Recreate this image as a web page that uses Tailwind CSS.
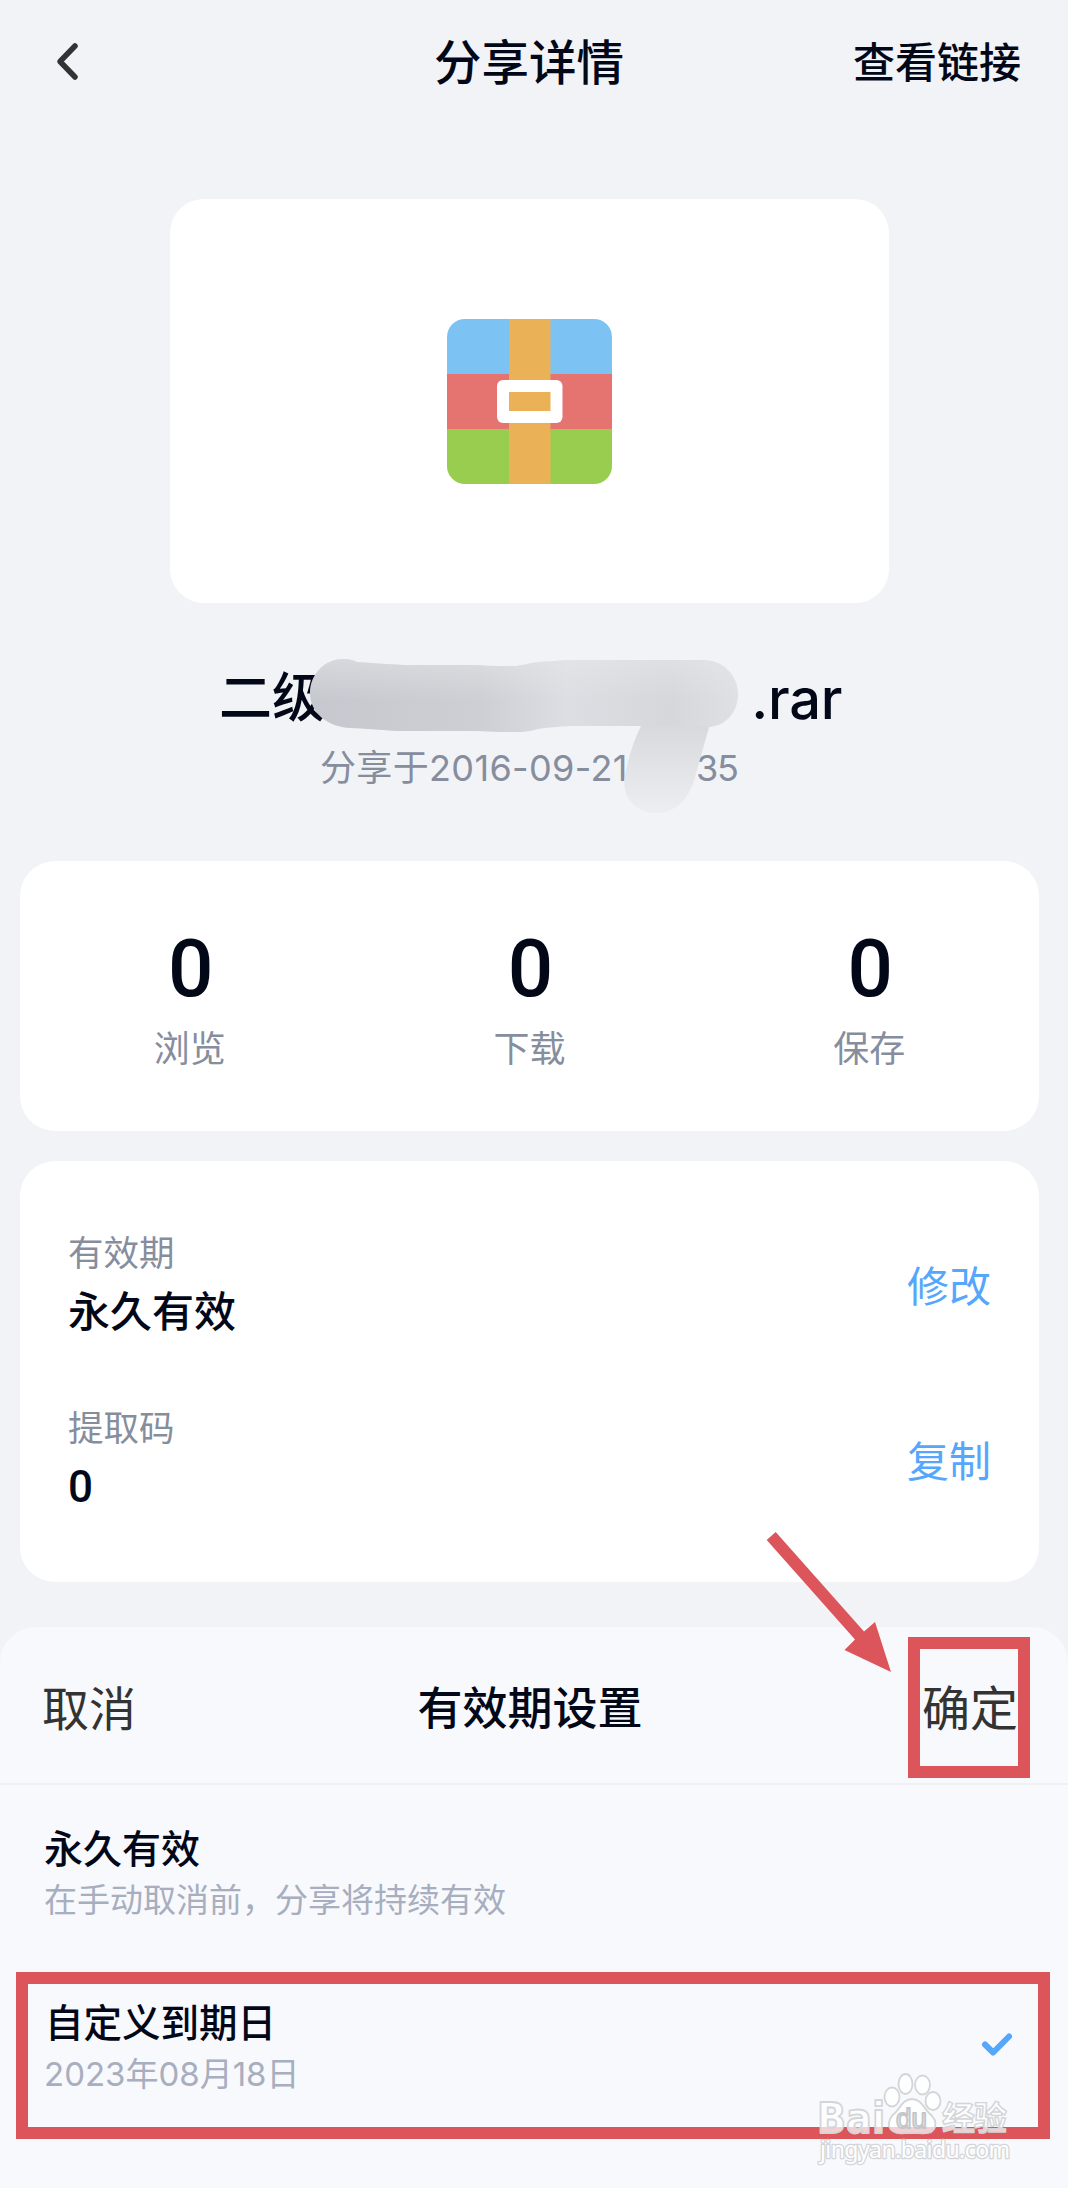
<!DOCTYPE html>
<html lang="zh-CN">
<head>
<meta charset="utf-8">
<title>分享详情</title>
<script src="https://cdn.jsdelivr.net/npm/@tailwindcss/browser@4"></script>
</head>
<body class="bg-[#f1f3f7] font-['Inter','Noto_Sans_CJK_SC',sans-serif] text-[#030818]">
<div class="relative flex h-[2188px] w-[1068px] flex-col overflow-hidden">

  <header class="grid h-[126px] grid-cols-3 items-center pl-[52px] pr-[47px]">
    <svg class="-mt-[2px] h-[40px] w-[30px]" viewBox="0 0 30 40" fill="none" stroke="#333" stroke-width="5.500" stroke-linecap="round" stroke-linejoin="round"><path d="M23 4 8 19.500 23 35"/></svg>
    <h1 class="-ml-[15px] text-center text-[47.5px] leading-[60px] font-medium">分享详情</h1>
    <span class="text-right text-[42px] leading-[60px] font-medium">查看链接</span>
  </header>

  <main class="flex flex-col pl-5 pr-[29px]">
    <div class="mx-auto mt-[73px] flex h-[404px] w-[719px] items-center justify-center rounded-[34px] bg-white">
      <svg class="h-[165px] w-[165px]" viewBox="0 0 165 165">
        <defs><clipPath id="tile"><rect width="165" height="165" rx="18"/></clipPath></defs>
        <g clip-path="url(#tile)">
          <rect width="165" height="55" fill="#7cc3f3"/>
          <rect y="55" width="165" height="55" fill="#e5736f"/>
          <rect y="110" width="165" height="55" fill="#98cd50"/>
          <rect x="62" width="41.500" height="165" fill="#ebb156"/>
        </g>
        <rect x="50" y="61" width="65.500" height="43" rx="6" fill="#fff"/>
        <rect x="62" y="73" width="41.500" height="19" fill="#ebb156"/>
      </svg>
    </div>

    <div class="mt-[63px] flex h-[64px] items-center justify-between pl-[199px] pr-[197px] text-[53px] leading-[64px] font-medium">
      <span>二级</span><span class="pt-px text-[56px] tracking-[-0.3px]">.rar</span>
    </div>
    <div class="mt-[15px] flex h-[46px] items-center justify-between pl-[300px] pr-[301px] text-[36px] leading-[46px] text-[#868d9d]">
      <span class="tracking-[0.35px]">分享于2016-09-21</span><span class="tracking-[-1px]">35</span>
    </div>

    <section class="mt-[70px] grid h-[270px] grid-cols-3 rounded-[35px] bg-white pt-[68px] text-center">
      <div><p class="pl-[2px] font-['Roboto'] text-[80px] leading-[80px] font-medium">0</p><p class="mt-[17px] text-[36px] leading-[46px] text-[#868d9d]">浏览</p></div>
      <div><p class="pl-[2px] font-['Roboto'] text-[80px] leading-[80px] font-medium">0</p><p class="mt-[17px] text-[36px] leading-[46px] text-[#868d9d]">下载</p></div>
      <div><p class="pl-[2px] font-['Roboto'] text-[80px] leading-[80px] font-medium">0</p><p class="mt-[17px] text-[36px] leading-[46px] text-[#868d9d]">保存</p></div>
    </section>

    <section class="mt-[30px] flex h-[421px] flex-col gap-[59px] rounded-[35px] bg-white px-12 pt-[68px]">
      <div class="flex h-[116px] items-center justify-between">
        <div>
          <p class="text-[35.500px] leading-[50px] text-[#868d9d]">有效期</p>
          <p class="mt-[3px] mb-[3px] text-[42px] leading-[60px] font-medium">永久有效</p>
        </div>
        <span class="text-[42px] leading-[60px] text-[#56a6fb]">修改</span>
      </div>
      <div class="flex h-[116px] items-center justify-between">
        <div>
          <p class="text-[35.500px] leading-[50px] text-[#868d9d]">提取码</p>
          <p class="mt-[3px] mb-[3px] font-['Roboto'] text-[44px] leading-[60px] font-medium">0</p>
        </div>
        <span class="text-[42px] leading-[60px] text-[#56a6fb]">复制</span>
      </div>
    </section>
  </main>

  <section class="mt-[45px] flex flex-1 flex-col rounded-t-[36px] bg-[#f8f9fc]">
    <div class="flex h-[158px] items-center justify-between border-b-2 border-[#eef0f3] pt-[7px] pl-[42px] pr-[50px] text-[47px] leading-[60px] text-[#333]">
      <span>取消</span>
      <h2 class="ml-[2px] text-[45px] font-medium text-[#030818]">有效期设置</h2>
      <span class="text-[48px]">确定</span>
    </div>
    <div class="px-11 pt-[38px]">
      <p class="text-[39px] leading-[52px] font-medium">永久有效</p>
      <p class="text-[33px] leading-[50px] text-[#a7aebf]">在手动取消前，分享将持续有效</p>
    </div>
    <div class="flex items-center justify-between pt-[72px] pl-11 pr-[54px]">
      <div>
        <p class="pl-px text-[38.500px] leading-[52px] font-medium">自定义到期日</p>
        <p class="text-[33px] leading-[50px] text-[#a7aebf]">2023年08月18日</p>
      </div>
      <svg class="-mt-[9px] h-[24px] w-[34px]" viewBox="0 0 34 24" fill="none" stroke="#56a6fb" stroke-width="6" stroke-linecap="round" stroke-linejoin="round"><path d="M5 12.500 13.200 20.500 29 4.500"/></svg>
    </div>
  </section>

  <!-- smudge over file name and time -->
  <svg class="absolute left-[300px] top-[650px] h-[170px] w-[450px]" viewBox="300 650 450 170">
    <defs>
      <linearGradient id="smH" x1="310" x2="738" y1="0" y2="0" gradientUnits="userSpaceOnUse"><stop offset="0" stop-color="#c5c8ce"/><stop offset=".4" stop-color="#cecfd4"/><stop offset=".6" stop-color="#dddee3"/><stop offset=".84" stop-color="#d6d7db"/><stop offset="1" stop-color="#dfe0e4"/></linearGradient>
      <linearGradient id="smV" x1="0" x2="0" y1="726" y2="813" gradientUnits="userSpaceOnUse"><stop offset="0" stop-color="#d8d9dd"/><stop offset="1" stop-color="#edeef2"/></linearGradient>
      <linearGradient id="smT" x1="0" x2="0" y1="659" y2="700" gradientUnits="userSpaceOnUse"><stop offset="0" stop-color="#e8e8ec" stop-opacity=".5"/><stop offset="1" stop-color="#e8e8ec" stop-opacity="0"/></linearGradient>
    </defs>
    <path fill="url(#smV)" d="M641 724H710L695 777C689 800 675 813 657 813C637 813 621 799 625 776Q630 748 641 726Z"/>
    <path fill="url(#smH)" d="M310 693C310 674 325 659 343 659Q351 659 357 662Q382 664 404 665H477Q487 666 497 666H516C527 665 528 663 538 662Q555 661 569 660H703C723 660 738 675 738 694C738 712 726 726 709 727L641 726H573Q552 727 538 729Q530 732 521 732H499L477 731H395Q370 729 350 728C328 727 310 713 310 693Z"/>
    <path fill="url(#smT)" d="M310 700V693C310 674 325 659 343 659Q351 659 357 662Q382 664 404 665H477Q487 666 497 666H516C527 665 528 663 538 662Q555 661 569 660H703C723 660 738 675 738 694V700Z"/>
  </svg>

  <!-- callouts -->
  <div class="absolute left-[908px] top-[1637px] h-[141px] w-[122px] border-[12px] border-[#dc555a]"></div>
  <div class="absolute left-[16px] top-[1972px] h-[167px] w-[1034px] border-[12px] border-[#dc555a]"></div>
  <svg class="absolute left-[760px] top-[1525px] h-[150px] w-[140px]" viewBox="760 1525 140 150" fill="#dc555a"><path d="M766.700 1540 775.700 1532 864 1631.500 875 1622 891 1672 844.500 1650 855 1639.500Z"/></svg>

  <!-- watermark -->
  <svg class="absolute left-[810px] top-[2065px] h-[110px] w-[210px]" viewBox="810 2065 210 110" fill="#fff" fill-opacity=".72" stroke="#d3d5d8" stroke-width="1.800" stroke-linejoin="round">
    <ellipse cx="892" cy="2097" rx="7.500" ry="9.500"/>
    <ellipse cx="905.500" cy="2084" rx="7" ry="10"/>
    <ellipse cx="922.500" cy="2085" rx="7.500" ry="9.500"/>
    <ellipse cx="933" cy="2101" rx="7.500" ry="9"/>
    <path d="M912 2099C920 2099 923 2106 928 2112C934 2117 937 2122 935 2127C933 2134 926 2134 919 2133H905C897 2134 891 2132 889 2126C888 2120 891 2116 896 2112C901 2106 904 2099 912 2099Z"/>
    <text x="817" y="2132.500" font-family="DejaVu Sans" font-weight="700" font-size="42" textLength="68" lengthAdjust="spacingAndGlyphs">Bai</text>
    <text x="896" y="2128" font-family="Liberation Sans" font-size="27" stroke="#c3c5c9" textLength="31" lengthAdjust="spacingAndGlyphs">du</text>
    <text x="942" y="2130" font-family="Noto Sans CJK SC" font-weight="700" font-size="33" stroke-width="1.400" textLength="65">经验</text>
    <text x="820" y="2158" font-family="Noto Sans" font-size="23" stroke-width="2.600" paint-order="stroke" fill-opacity="1" textLength="190">jingyan.baidu.com</text>
  </svg>
</div>
</body>
</html>
